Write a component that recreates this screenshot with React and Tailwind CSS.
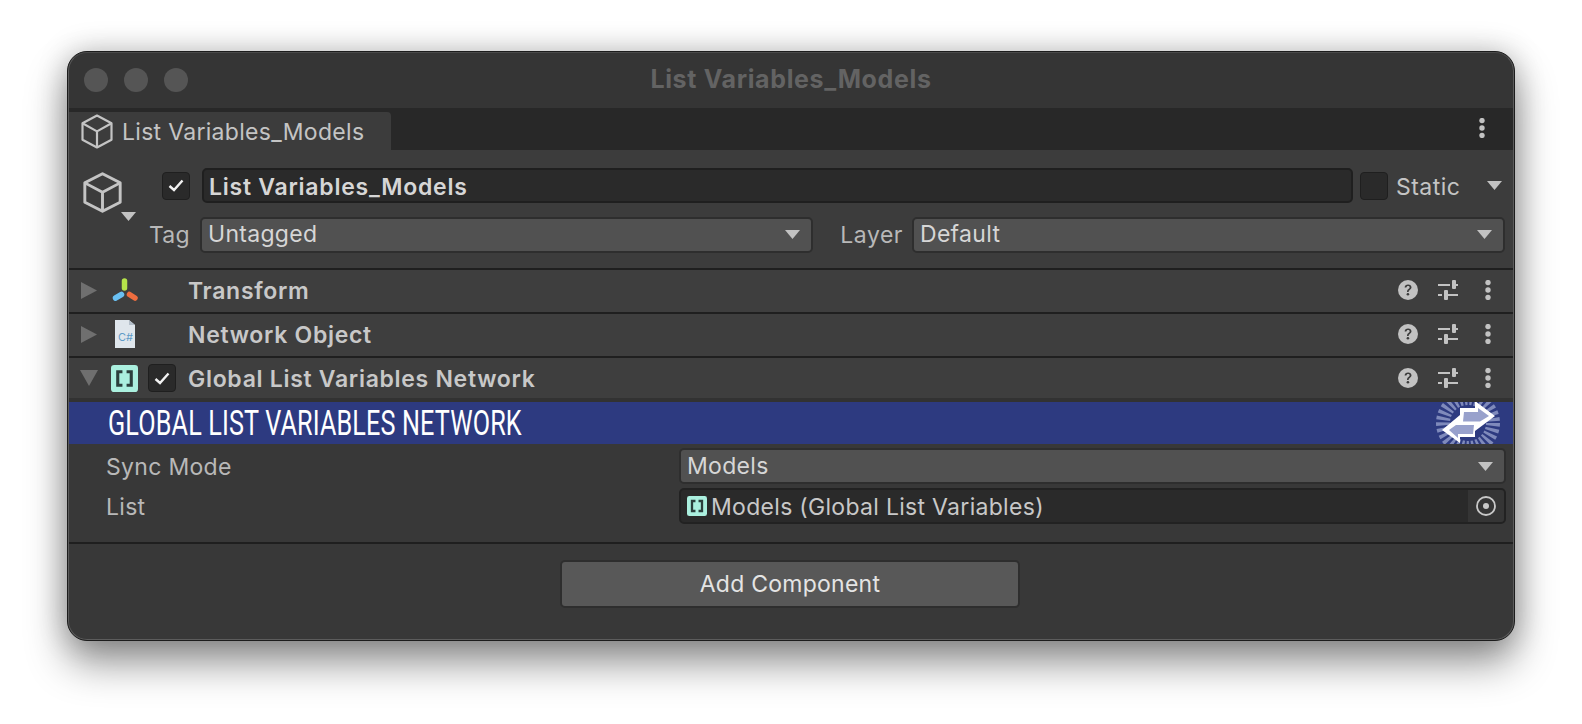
import React from "react";

const Tri = ({ className = "", color = "#c2c2c2", w = 15, h = 9 }) => (
  <svg width={w} height={h} viewBox="0 0 14 9" preserveAspectRatio="none" className={"shrink-0 " + className}>
    <path d="M0 0H14L7 9Z" fill={color} />
  </svg>
);

const RightTri = () => (
  <svg width="16" height="17" viewBox="0 0 16 18" preserveAspectRatio="none" className="shrink-0">
    <path d="M0 0L16 9L0 18Z" fill="#6f6f6f" />
  </svg>
);

const Cube = ({ w = 32, h = 35, stroke = "#c4c4c4", sw = 2.2 }) => (
  <svg width={w} height={h} viewBox="0 0 32 36" preserveAspectRatio="none" fill="none" className="shrink-0">
    <path d="M16 1.5L30.5 9.5V26.5L16 34.5L1.5 26.5V9.5Z" stroke={stroke} strokeWidth={sw} strokeLinejoin="round" />
    <path d="M1.5 9.5L16 17.8L30.5 9.5M16 17.8V34.5" stroke={stroke} strokeWidth={sw} strokeLinejoin="round" />
  </svg>
);

const Check = () => (
  <svg width="16" height="13" viewBox="0 0 16 13" fill="none">
    <path d="M1.5 7L6 11L14.5 1.5" stroke="#f2f2f2" strokeWidth="2.4" />
  </svg>
);

const CheckBox = ({ checked = true }) => (
  <div className="w-[28px] h-[28px] shrink-0 flex items-center justify-center rounded-[4px] bg-[#2a2a2a] border border-[#1f1f1f]">
    {checked && <Check />}
  </div>
);

const Help = () => (
  <svg width="20" height="20" viewBox="0 0 20 20" className="shrink-0">
    <circle cx="10" cy="10" r="10" fill="#c2c2c2" />
    <path d="M6.6 7.6C6.7 5.6 8 4.5 10.1 4.5C12.1 4.5 13.5 5.7 13.5 7.3C13.5 8.6 12.8 9.2 11.8 9.9C11 10.5 10.7 10.9 10.7 11.9H9C9 10.4 9.4 9.7 10.5 8.9C11.3 8.3 11.6 8 11.6 7.4C11.6 6.6 11 6.1 10.1 6.1C9.1 6.1 8.5 6.7 8.4 7.6Z" fill="#3c3c3c" />
    <circle cx="9.9" cy="14.3" r="1.3" fill="#3c3c3c" />
  </svg>
);

const Sliders = () => (
  <svg width="20" height="20" viewBox="0 0 20 20" className="shrink-0">
    <rect x="0" y="4" width="12" height="2" fill="#c2c2c2" />
    <rect x="14" y="0" width="4" height="9" rx="1" fill="#c2c2c2" />
    <rect x="18" y="4" width="2" height="2" fill="#c2c2c2" />
    <rect x="0" y="14" width="4" height="2" fill="#c2c2c2" />
    <rect x="6" y="10" width="4" height="10" rx="1" fill="#c2c2c2" />
    <rect x="10" y="14" width="10" height="2" fill="#c2c2c2" />
  </svg>
);

const Dots = () => (
  <svg width="6" height="20" viewBox="0 0 6 20" className="shrink-0">
    <circle cx="3" cy="2.6" r="2.7" fill="#c2c2c2" />
    <circle cx="3" cy="10" r="2.7" fill="#c2c2c2" />
    <circle cx="3" cy="17.4" r="2.7" fill="#c2c2c2" />
  </svg>
);

const Brackets = ({ size = 27 }) => (
  <svg width={size} height={size} viewBox="0 0 26 26" className="shrink-0">
    <rect width="26" height="26" rx="3" fill="#abf0df" />
    <path d="M11 6.5H6.5V19.5H11M15 6.5H19.5V19.5H15" fill="none" stroke="#2b3f3c" strokeWidth="3" />
  </svg>
);

const TransformIcon = () => (
  <svg width="26" height="26" viewBox="0 0 26 26" className="shrink-0">
    <path d="M12.5 4V11" stroke="#b5e34a" strokeWidth="5.5" strokeLinecap="round" />
    <path d="M3.5 21L9.5 17.5" stroke="#69bff2" strokeWidth="5.5" strokeLinecap="round" />
    <path d="M17.5 17.5L23 21" stroke="#ee6d3f" strokeWidth="5.5" strokeLinecap="round" />
  </svg>
);

const CsIcon = () => (
  <svg width="20" height="28" viewBox="0 0 20 28" className="shrink-0">
    <path d="M0 0H14L20 5V28H0Z" fill="#dfe6ec" />
    <path d="M14 0L20 5H14Z" fill="#b4bfca" />
    <text x="3" y="21" fontSize="11" letterSpacing="0" fill="#5f9cc8" fontFamily="Inter, sans-serif">C#</text>
  </svg>
);

const RowTail = ({ title }) => (
  <>
    <div className="flex-1 font-semibold text-[#c8c8c8] tracking-[0.7px] pt-[2px]">{title}</div>
    <div className="flex items-center pr-[23px]">
      <Help />
      <div className="ml-[20px]"><Sliders /></div>
      <div className="ml-[27px] flex"><Dots /></div>
    </div>
  </>
);

const Row = ({ icon, title }) => (
  <div className="h-[44px] shrink-0 flex items-center bg-[#3e3e3e] border-t-2 border-[#1f1f1f] pb-[2px]">
    <div className="w-[44px] pl-[13px] flex items-center shrink-0"><RightTri /></div>
    <div className="w-[26px] flex justify-center shrink-0">{icon}</div>
    <div className="w-[50px] shrink-0" />
    <RowTail title={title} />
  </div>
);

const Dropdown = ({ label, className = "" }) => (
  <div className={"h-[36px] rounded-[5px] bg-[#515151] border-2 border-[#2e2e2e] flex items-center justify-between pl-[6px] pr-[11px] text-[#d6d6d6] " + className}>
    <span>{label}</span>
    <Tri />
  </div>
);

const BannerIcon = () => (
  <svg width="64" height="42" viewBox="0 0 64 42" className="shrink-0">
    <circle cx="32" cy="21" r="25" fill="none" stroke="#7f8abb" strokeWidth="14" strokeDasharray="3 2.4" />
    <path d="M24 6H39V-1L59 14L39 29V35H24V41L6 28L24 13Z" fill="#ffffff" />
    <path d="M28 10H42V6L53 14L44 19.5H27Z" fill="#98a1cc" />
    <path d="M13 28L20 23H38L37 32H22V36Z" fill="#98a1cc" />
  </svg>
);

export default function App() {
  return (
    <div className="w-[1582px] h-[724px] bg-white pt-[51px] pl-[67px] overflow-hidden font-['Inter',sans-serif] text-[23px] tracking-[0.3px]">
      <div className="w-[1448px] h-[590px] rounded-[20px] overflow-hidden border border-[#1c1c1c] bg-[#383838] shadow-[0_22px_40px_rgba(0,0,0,0.42),0_0_30px_rgba(0,0,0,0.22)] flex flex-col relative">
        <div className="absolute inset-0 rounded-[19px] border border-[#5c5c5c] border-t-[#4a4a4a] pointer-events-none z-10" />
        {/* title bar */}
        <div className="h-[56px] shrink-0 bg-[#353535] flex items-center relative pl-[16px] gap-[16px]">
          <div className="w-[24px] h-[24px] rounded-full bg-[#555555]" />
          <div className="w-[24px] h-[24px] rounded-full bg-[#555555]" />
          <div className="w-[24px] h-[24px] rounded-full bg-[#555555]" />
          <div className="absolute inset-0 flex items-center justify-center font-bold text-[25px] tracking-[0.65px] text-[#636363]">List Variables_Models</div>
        </div>
        {/* tab strip */}
        <div className="h-[42px] shrink-0 bg-[#282828] flex items-end justify-between">
          <div className="h-[38px] w-[322px] ml-[1px] bg-[#3c3c3c] rounded-tr-[4px] flex items-center pl-[12px] gap-[9px] text-[#c4c4c4]">
            <Cube />
            <span className="pt-[2px]">List Variables_Models</span>
          </div>
          <div className="self-center pr-[29px] flex pb-[2px]"><Dots /></div>
        </div>
        {/* header */}
        <div className="h-[118px] shrink-0 bg-[#3c3c3c] flex flex-col">
          <div className="flex items-center h-[35px] mt-[18px]">
            <div className="w-[94px] shrink-0 pl-[15px] flex">
              <div className="relative mt-[13px]">
                <Cube w={39} h={41} sw={2.4} />
                <Tri className="absolute top-[40px] left-[38px]" />
              </div>
            </div>
            <CheckBox />
            <div className="w-[1151px] h-[35px] ml-[12px] shrink-0 rounded-[5px] bg-[#2a2a2a] border-2 border-[#1f1f1f] flex items-center pl-[5px] pt-[3px] font-semibold tracking-[0.75px] text-[#d6d6d6]">List Variables_Models</div>
            <div className="ml-[7px]"><CheckBox checked={false} /></div>
            <span className="ml-[8px] pt-[3px] tracking-[0.45px] text-[#c4c4c4]">Static</span>
            <Tri className="ml-[27px]" />
          </div>
          <div className="flex items-center h-[35px] mt-[14px]">
            <span className="w-[124px] text-right pr-[2px] pt-[2px] shrink-0 text-[#b8b8b8]">Tag</span>
            <Dropdown label="Untagged" className="w-[613px] ml-[8px] shrink-0" />
            <span className="w-[99px] text-right shrink-0 text-[#b8b8b8] pr-[9px] pt-[2px] tracking-[0.5px]">Layer</span>
            <Dropdown label="Default" className="w-[593px] shrink-0" />
          </div>
        </div>
        <Row icon={<TransformIcon />} title="Transform" />
        <Row icon={<CsIcon />} title="Network Object" />
        <div className="h-[42px] shrink-0 flex items-center bg-[#3e3e3e] border-t-2 border-[#1f1f1f]">
          <div className="w-[43px] pl-[12px] flex items-center shrink-0"><Tri w={18} h={16} color="#6f6f6f" /></div>
          <div className="w-[27px] flex justify-center shrink-0"><Brackets /></div>
          <div className="w-[50px] shrink-0 flex pl-[10px]"><CheckBox /></div>
          <RowTail title="Global List Variables Network" />
        </div>
        {/* banner */}
        <div className="h-[46px] shrink-0 bg-[#323232] pt-[4px]">
          <div className="h-[42px] bg-[#2d3a80] flex items-center justify-between pl-[40px] pr-[14px] overflow-hidden">
            <span className="text-white text-[35px] leading-none font-normal tracking-[0.2px] whitespace-nowrap origin-left scale-x-[0.72] font-['Roboto',sans-serif]">GLOBAL LIST VARIABLES NETWORK</span>
            <BannerIcon />
          </div>
        </div>
        {/* fields */}
        <div className="h-[100px] shrink-0 bg-[#383838] border-b-2 border-[#1f1f1f] flex flex-col pt-[4px]">
          <div className="flex items-center h-[36px]">
            <span className="w-[611px] shrink-0 pl-[38px] pt-[2px] text-[#b8b8b8]">Sync Mode</span>
            <Dropdown label="Models" className="w-[827px] shrink-0" />
          </div>
          <div className="flex items-center h-[36px] mt-[4px]">
            <span className="w-[611px] shrink-0 pl-[38px] pt-[2px] text-[#b8b8b8]">List</span>
            <div className="w-[827px] h-[36px] shrink-0 rounded-[5px] bg-[#2a2a2a] border-2 border-[#222222] flex items-center pl-[6px] text-[#c8c8c8] overflow-hidden">
              <Brackets size={20} />
              <span className="flex-1 ml-[4px] pt-[2px]">Models (Global List Variables)</span>
              <div className="w-[36px] h-full bg-[#353535] flex items-center justify-center">
                <svg width="20" height="20" viewBox="0 0 20 20"><circle cx="10" cy="10" r="9" fill="none" stroke="#c8c8c8" strokeWidth="1.8" /><circle cx="10" cy="10" r="3" fill="#c8c8c8" /></svg>
              </div>
            </div>
          </div>
        </div>
        {/* add component */}
        <div className="flex-1 bg-[#383838] flex justify-center pt-[16px] pr-[2px]">
          <div className="w-[460px] h-[48px] rounded-[5px] bg-[#585858] border-2 border-[#2e2e2e] flex items-center justify-center text-[#e4e4e4] tracking-[0.25px]">Add Component</div>
        </div>
      </div>
    </div>
  );
}
